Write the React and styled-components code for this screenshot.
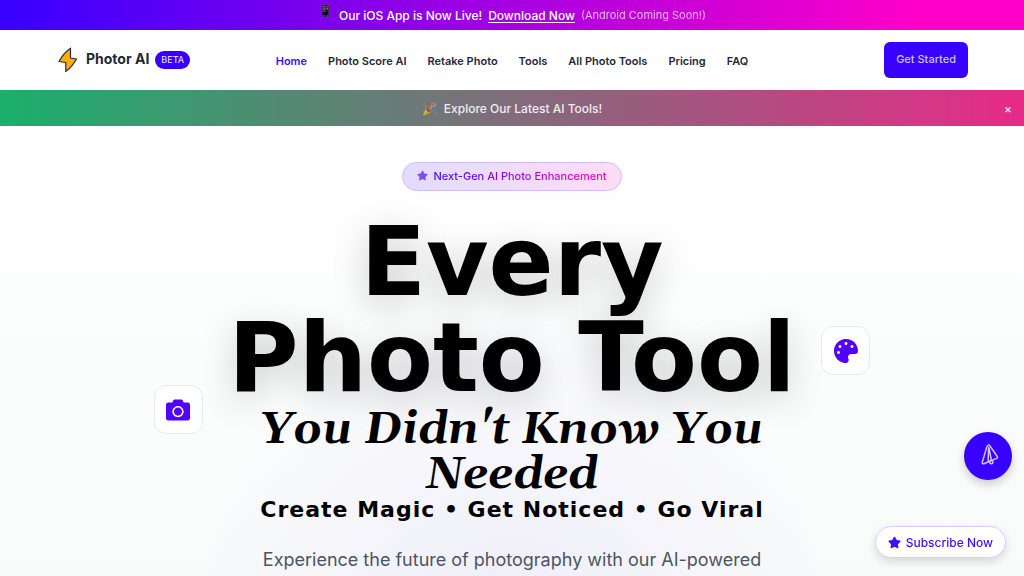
import React from "react";
import styled, { createGlobalStyle } from "styled-components";
import { FaCamera, FaPalette, FaStar } from "react-icons/fa";

const GlobalStyle = createGlobalStyle`
  *, *::before, *::after { box-sizing: border-box; }
  body {
    margin: 0;
    font-family: Inter, "Liberation Sans", sans-serif;
    color: #1f2937;
    background: #fff;
    overflow: hidden;
  }
  a { color: inherit; text-decoration: none; }
  button { font-family: inherit; border: 0; cursor: pointer; }
`;

const Page = styled.div`
  min-height: 100vh;
  overflow: hidden;
`;

const AppBanner = styled.div`
  display: flex;
  justify-content: center;
  gap: 6px;
  height: 30px;
  line-height: 31px;
  font-size: 12px;
  font-weight: 500;
  color: #fff;
  background: linear-gradient(90deg, #3700ff, #ff00c8 90%);
`;

const PhoneEmoji = styled.span`
  line-height: 22px;
  opacity: 0.8;
`;

const DownloadLink = styled.a`
  text-decoration: underline;
  text-underline-offset: 2px;
`;

const BannerNote = styled.span`
  font-size: 11px;
  font-weight: 400;
  opacity: 0.7;
`;

const Header = styled.header`
  display: grid;
  grid-template-columns: 1fr auto 1fr;
  align-items: center;
  height: 60px;
  padding: 0 56px;
`;

const Brand = styled.a`
  display: flex;
  align-items: center;
  gap: 6px;
  font-size: 14px;
  font-weight: 700;
`;

const BrandName = styled.span`
  padding-bottom: 3px;
`;

const Bolt = styled.svg`
  width: 24px;
  height: 26px;
`;

const BetaTag = styled.span`
  padding: 0 6px;
  border-radius: 9px;
  line-height: 18px;
  font-size: 9px;
  font-weight: 500;
  color: #ddd6fe;
  background: #3700ff;
`;

const Nav = styled.nav`
  display: flex;
  gap: 21px;
  padding-top: 1px;
`;

const NavLink = styled.a`
  font-size: 11px;
  font-weight: 600;
  color: ${(p) => (p.$active ? "#3f0dff" : "#1f2937")};
`;

const StartButton = styled.button`
  justify-self: end;
  height: 36px;
  padding: 0 12px 2px;
  border-radius: 6px;
  font-size: 11px;
  font-weight: 500;
  color: #d0c4ff;
  background: #3700ff;
`;

const PromoBar = styled.div`
  display: grid;
  grid-template-columns: 32px 1fr 32px;
  align-items: center;
  height: 36px;
  color: #f1edf3;
  background: linear-gradient(90deg, #1aaf6c, #e72a88);
`;

const PromoText = styled.p`
  grid-column: 2;
  margin: 0;
  text-align: center;
  font-size: 12px;
  font-weight: 500;
`;

const PromoEmoji = styled.span`
  margin-right: 7px;
  opacity: 0.7;
`;

const CloseButton = styled.button`
  padding: 0;
  font-size: 12px;
  color: #fff;
  background: none;
`;

const Hero = styled.main`
  position: relative;
  display: flex;
  flex-direction: column;
  align-items: center;
  min-height: calc(100vh - 126px);
  padding: 36px 24px 0;
  text-align: center;
  background:
    radial-gradient(circle at 50% 112%, rgba(80, 40, 255, 0.06), transparent 320px),
    linear-gradient(180deg, #fff, #f9fafa);
`;

const Pill = styled.div`
  display: flex;
  align-items: center;
  gap: 5px;
  height: 29px;
  padding: 0 14px 2px;
  border: 1px solid #cfbdfb;
  border-radius: 15px;
  font-size: 11px;
  font-weight: 500;
  background: linear-gradient(90deg, #e2dcff, #ffdcf5);
  svg { color: #7c4dff; }
`;

const PillText = styled.span`
  color: transparent;
  background: linear-gradient(90deg, #3f0dff, #ff00c8);
  background-clip: text;
`;

const Title = styled.h1`
  max-width: 600px;
  margin: 23px 0 0;
  color: #000;
  font-family: "DejaVu Sans", sans-serif;
  font-size: 96px;
  font-weight: 700;
  line-height: 96px;
  text-shadow: 0 10px 36px rgba(0, 0, 0, 0.2);
`;

const TitleAccent = styled.span`
  display: block;
  margin: 1px 0 2px;
  font-family: Georgia, Gelasio, "Liberation Serif", serif;
  font-size: 45px;
  font-style: italic;
  line-height: 45px;
  text-shadow: none;
`;

const TitleTag = styled.span`
  display: block;
  font-size: 22px;
  line-height: 22px;
  letter-spacing: 1px;
  text-shadow: none;
`;

const Lead = styled.p`
  max-width: 540px;
  margin: 24px 0 0;
  font-size: 18px;
  line-height: 29px;
  color: #4b5563;
`;

const FloatingTile = styled.div`
  position: absolute;
  top: ${(p) => p.$top};
  left: ${(p) => p.$left};
  display: grid;
  place-items: center;
  width: 49px;
  height: 49px;
  border: 1px solid #e9eaeb;
  border-radius: 12px;
  color: #5200ff;
  background: #fff;
`;

const ChatButton = styled.button`
  position: fixed;
  right: 12px;
  bottom: 96px;
  display: grid;
  place-items: center;
  width: 48px;
  height: 48px;
  padding: 0;
  border-radius: 50%;
  color: #d0c4ff;
  background: #3700ff;
  box-shadow: 0 4px 10px rgba(0, 0, 0, 0.2);
`;

const SubscribeButton = styled.button`
  position: fixed;
  right: 18px;
  bottom: 18px;
  display: flex;
  align-items: center;
  gap: 5px;
  height: 32px;
  padding: 0 12px;
  border: 1px solid #d9ceff;
  border-radius: 16px;
  font-size: 12px;
  font-weight: 500;
  color: #3f0dff;
  background: #fff;
  box-shadow: 0 4px 10px rgba(0, 0, 0, 0.14);
`;

const links = ["Home", "Photo Score AI", "Retake Photo", "Tools", "All Photo Tools", "Pricing", "FAQ"];

export default function App() {
  return (
    <Page>
      <GlobalStyle />
      <AppBanner>
        <PhoneEmoji>📱</PhoneEmoji>
        <span>Our iOS App is Now Live!</span>
        <DownloadLink href="#download">Download Now</DownloadLink>
        <BannerNote>(Android Coming Soon!)</BannerNote>
      </AppBanner>
      <Header>
        <Brand href="#home">
          <Bolt viewBox="0 0 24 26" aria-hidden="true">
            <path
              d="M14.500 1.200Q7 6.500 3 14.500L9.800 15.500V24.500Q16.500 19.500 20.500 12L14.500 11Z"
              fill="#ffad0d"
              stroke="#292b32"
              strokeWidth="1.200"
              strokeLinejoin="round"
            />
          </Bolt>
          <BrandName>Photor AI</BrandName>
          <BetaTag>BETA</BetaTag>
        </Brand>
        <Nav>
          {links.map((label, i) => (
            <NavLink key={label} href="#nav" $active={i === 0}>{label}</NavLink>
          ))}
        </Nav>
        <StartButton>Get Started</StartButton>
      </Header>
      <PromoBar>
        <PromoText><PromoEmoji>🎉</PromoEmoji>Explore Our Latest AI Tools!</PromoText>
        <CloseButton aria-label="Close">×</CloseButton>
      </PromoBar>
      <Hero>
        <Pill>
          <FaStar size={11} />
          <PillText>Next-Gen AI Photo Enhancement</PillText>
        </Pill>
        <Title>
          Every Photo Tool
          <TitleAccent>You Didn't Know You Needed</TitleAccent>
          <TitleTag>Create Magic • Get Noticed • Go Viral</TitleTag>
        </Title>
        <Lead>Experience the future of photography with our AI-powered</Lead>
        <FloatingTile $top="259px" $left="15%"><FaCamera size={24} /></FloatingTile>
        <FloatingTile $top="200px" $left="80.200%"><FaPalette size={24} /></FloatingTile>
      </Hero>
      <ChatButton aria-label="Send a message">
        <svg width="24" height="24" viewBox="0 0 24 24" fill="none" stroke="currentColor" strokeWidth="1.500" strokeLinejoin="round" strokeLinecap="round" aria-hidden="true">
          <path d="M11.600 1.800Q12.500 0.200 13.800 1.800L21.300 12.500Q22 14 20.300 14.600L14 17 8 19.800Q6 20 6.300 18.200L10.800 3Z" />
          <path d="M12.600 3.500 12.200 17M13 4 15.300 15.800" />
          <circle cx="15.300" cy="18.200" r="1.600" />
        </svg>
      </ChatButton>
      <SubscribeButton><FaStar size={13} />Subscribe Now</SubscribeButton>
    </Page>
  );
}
